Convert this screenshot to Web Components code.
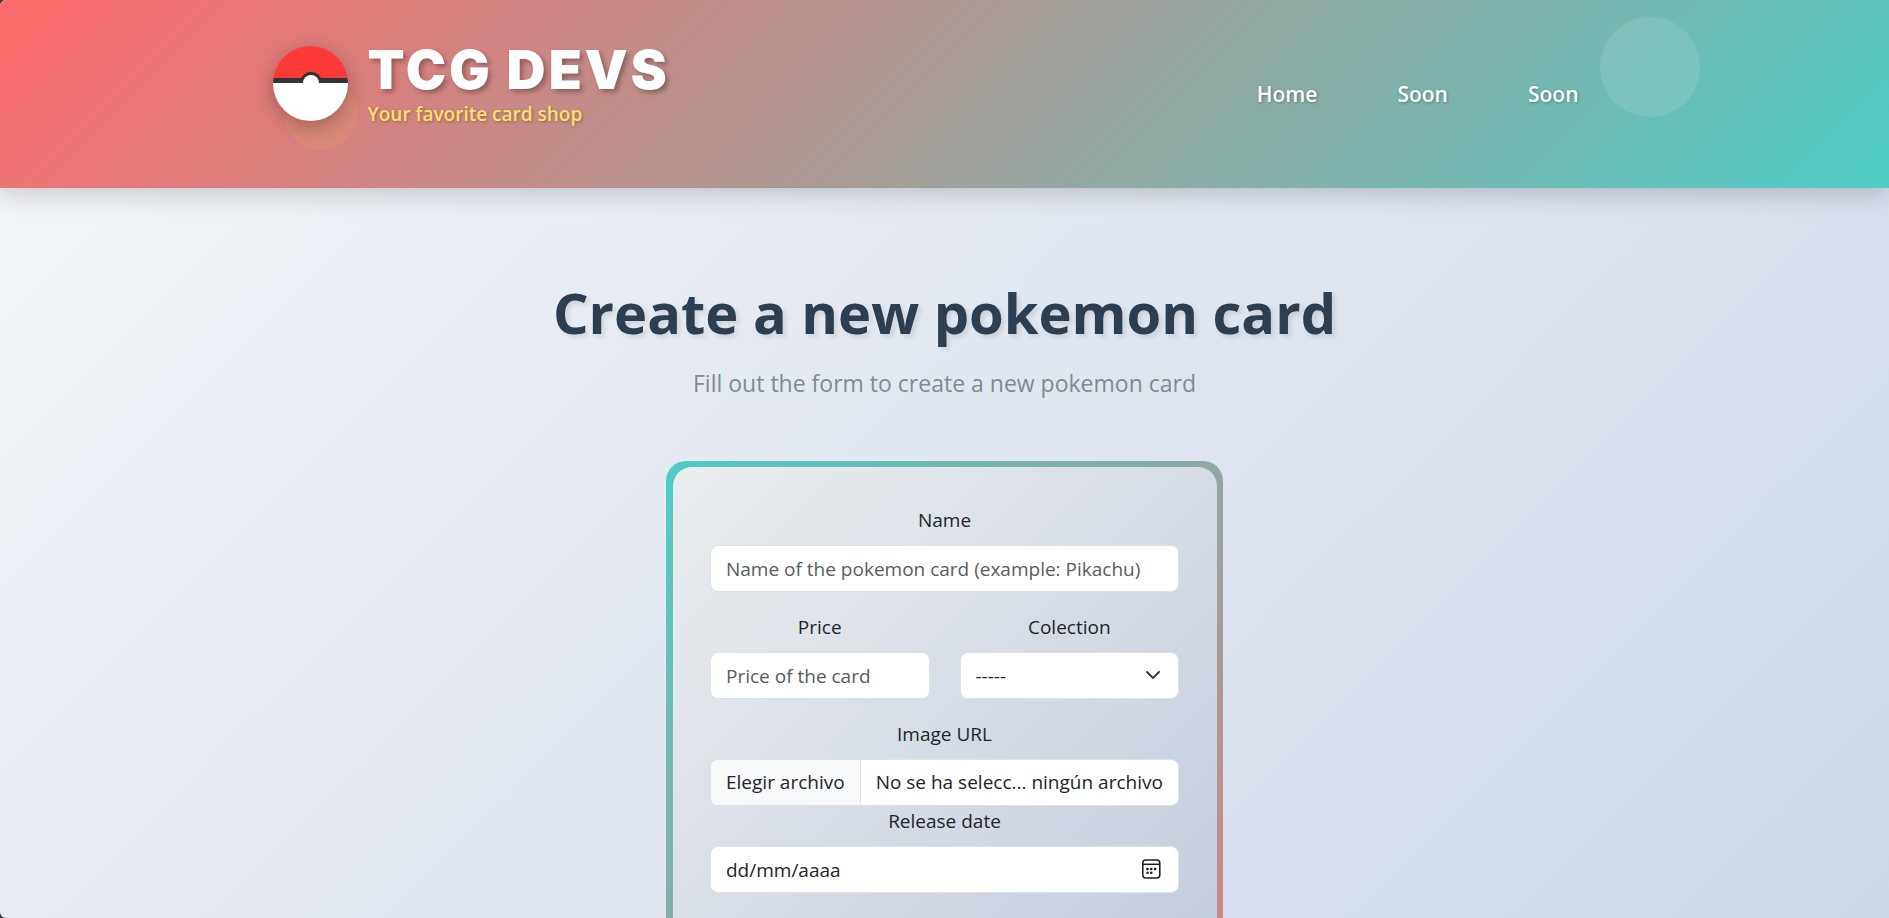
<!DOCTYPE html>
<html lang="en">
<head>
<meta charset="utf-8">
<meta name="viewport" content="width=device-width, initial-scale=1">
<title>TCG Devs</title>
<style>
  html { background: #3a3a3f; }
  body { margin: 0; font: 400 19px/30px "Open Sans", "Noto Sans", sans-serif; color: #212529; }
</style>
</head>
<body>
<tcg-page>
  <site-header slot="header">
    <site-brand slot="brand" tagline="Your favorite card shop">TCG DEVS</site-brand>
    <nav-link href="#home">Home</nav-link>
    <nav-link href="#soon">Soon</nav-link>
    <nav-link href="#later">Soon</nav-link>
  </site-header>
  <page-title>Create a new pokemon card<span slot="lead">Fill out the form to create a new pokemon card</span></page-title>
  <card-form>
    <text-field label="Name" placeholder="Name of the pokemon card (example: Pikachu)"></text-field>
    <field-row>
      <text-field label="Price" placeholder="Price of the card"></text-field>
      <select-field label="Colection" option="-----"></select-field>
    </field-row>
    <div class="stack">
      <file-field label="Image URL" button="Elegir archivo" status="No se ha selecc... ningún archivo"></file-field>
      <date-field label="Release date" placeholder="dd/mm/aaaa"></date-field>
    </div>
  </card-form>
</tcg-page>

<script>
  class BaseElement extends HTMLElement {
    connectedCallback() {
      if (this.shadowRoot) return;
      this.attachShadow({ mode: "open" }).innerHTML = this.render();
    }
    attr(name) { return this.getAttribute(name) || ""; }
  }

  customElements.define("tcg-page", class extends BaseElement {
    render() {
      return `<style>
        :host { display: flex; flex-direction: column; min-height: 100vh; border-radius: 6px 0 0 6px; overflow: hidden;
          background: linear-gradient(135deg, #f5f7fa, #c3cfe2) 0 0 / 100% 1620px; }
        main { flex: 1; display: flex; flex-direction: column; align-items: center; padding: 80px 24px 0; }
      </style>
      <slot name="header"></slot><main><slot></slot></main>`;
    }
  });

  customElements.define("site-header", class extends BaseElement {
    render() {
      return `<style>
        :host { display: block; position: relative; background: linear-gradient(135deg, #ff6b6b, #4ecdc4);
          box-shadow: 0 5px 25px rgba(0, 0, 0, .2); }
        header { position: relative; box-sizing: border-box; max-width: 1344px; min-height: 188px; margin: 0 auto;
          display: flex; justify-content: space-between; align-items: center; }
        nav { display: flex; gap: 80px; padding-right: 38px; }
        .bubble { position: absolute; border-radius: 50%; }
        .light { width: 100px; height: 100px; right: 10%; top: 17px; background: rgba(255, 255, 255, .1); }
        .warm { width: 75px; height: 75px; left: 15%; top: 75px; background: rgba(255, 217, 61, .1); }
      </style>
      <div class="bubble light"></div><div class="bubble warm"></div>
      <header><slot name="brand"></slot><nav aria-label="Main"><slot></slot></nav></header>`;
    }
  });

  customElements.define("poke-ball", class extends BaseElement {
    render() {
      return `<style>
        :host { display: block; width: 75px; height: 75px; border-radius: 50%; overflow: hidden;
          box-shadow: 0 5px 19px rgba(0, 0, 0, .3); }
        svg { display: block; }
      </style>
      <svg width="75" height="75" viewBox="0 0 75 75" aria-hidden="true">
        <rect width="75" height="75" fill="#ff3838"/>
        <rect y="32" width="75" height="5" fill="#333"/>
        <circle cx="38" cy="37" r="11" fill="#333"/>
        <rect y="37" width="75" height="38" fill="#fff"/>
        <circle cx="38" cy="37" r="8" fill="#fff"/>
      </svg>`;
    }
  });

  customElements.define("site-brand", class extends BaseElement {
    render() {
      return `<style>
        :host { display: flex; align-items: flex-start; gap: 20px; padding-bottom: 15px; }
        poke-ball { margin-top: 2px; }
        strong { display: block; font: 900 54px/52px Inter, "Liberation Sans", sans-serif; letter-spacing: 3px; color: #fff;
          text-shadow: 3px 3px 5px rgba(0, 0, 0, .3); }
        span { display: block; margin-top: 3px; font-weight: 600; color: #ffe066;
          text-shadow: 1px 1px 3px rgba(0, 0, 0, .3); }
      </style>
      <poke-ball></poke-ball>
      <div><strong><slot></slot></strong><span>${this.attr("tagline")}</span></div>`;
    }
  });

  customElements.define("nav-link", class extends BaseElement {
    render() {
      return `<style>
        :host { display: block; }
        a { color: #fff; text-decoration: none; font-size: 21px; line-height: 32px; font-weight: 600;
          text-shadow: 1px 1px 3px rgba(0, 0, 0, .3); }
      </style><a href="${this.attr("href")}"><slot></slot></a>`;
    }
  });

  customElements.define("page-title", class extends BaseElement {
    render() {
      return `<style>
        :host { display: block; text-align: center; margin-bottom: 60px; }
        h1 { margin: 0 0 10px; font-size: 56px; line-height: 88px; font-weight: 700; color: #2c3e50;
          text-shadow: 3px 3px 5px rgba(0, 0, 0, .1); }
        p { margin: 0; font-size: 23px; line-height: 35px; color: #7f8c8d; }
      </style><h1><slot></slot></h1><p><slot name="lead"></slot></p>`;
    }
  });

  customElements.define("card-form", class extends BaseElement {
    render() {
      return `<style>
        :host { flex: 1; display: flex; box-sizing: border-box; width: 100%; max-width: 557px; padding: 6px 6px 0 7px;
          border-radius: 20px 20px 0 0; background: linear-gradient(135deg, #4ecdc4, #ff6b6b) 0 0 / 100% 900px; }
        form { flex: 1; min-width: 0; padding: 38px 38px 24px 37px; border-radius: 19px 19px 0 0;
          background: linear-gradient(135deg, #ebeef0, #b3bed4) 0 0 / 100% 900px;
          display: flex; flex-direction: column; gap: 20px; }
      </style><form><slot></slot></form>`;
    }
  });

  customElements.define("field-row", class extends BaseElement {
    render() {
      return `<style>
        :host { display: grid; grid-template-columns: 1fr 1fr; gap: 30px; }
      </style><slot></slot>`;
    }
  });

  /* Shared frame of every form field: a centred label over one control. */
  class FormField extends BaseElement {
    render() {
      return `<style>
        :host { display: block; min-width: 0; }
        label.caption { display: block; margin-bottom: 10px; text-align: center; }
        .control { box-sizing: border-box; width: 100%; height: 47px; margin: 0; padding: 0 15px; display: block;
          font: inherit; color: inherit; background-color: #fff; border: 1px solid #dee2e6; border-radius: 8px; }
        .control::placeholder { color: #595c5f; opacity: 1; }
        ${this.css || ""}
      </style>
      <label class="caption" for="control">${this.attr("label")}</label>${this.control()}`;
    }
  }

  customElements.define("text-field", class extends FormField {
    control() { return `<input class="control" id="control" type="text" placeholder="${this.attr("placeholder")}">`; }
  });

  customElements.define("select-field", class extends FormField {
    css = `
      .wrap { position: relative; }
      select { appearance: none; }
      svg { position: absolute; right: 18px; top: 15px; pointer-events: none; }`;
    control() {
      return `<div class="wrap"><select class="control" id="control"><option>${this.attr("option")}</option></select>
        <svg width="16" height="16" viewBox="0 0 16 16" aria-hidden="true"><path d="m2 5 6 6 6-6" fill="none" stroke="#343a40" stroke-width="2" stroke-linecap="round" stroke-linejoin="round"/></svg></div>`;
    }
  });

  customElements.define("file-field", class extends FormField {
    css = `
      .file { position: relative; display: flex; padding: 0; overflow: hidden; line-height: 45px; white-space: nowrap; }
      .pick { padding: 0 15px; background: #f8f9fa; border-right: 1px solid #dee2e6; }
      .status { flex: 1; padding: 0 15px; overflow: hidden; }
      input { position: absolute; inset: 0; opacity: 0; width: 100%; }`;
    control() {
      return `<div class="control file"><span class="pick">${this.attr("button")}</span>
        <span class="status">${this.attr("status")}</span><input id="control" type="file"></div>`;
    }
  });

  customElements.define("date-field", class extends FormField {
    css = `
      .wrap { position: relative; }
      .control::placeholder { color: #212529; }
      button { position: absolute; right: 17px; top: 12px; padding: 0; border: 0; background: none; width: 22px; height: 22px; }
      svg { display: block; }`;
    control() {
      return `<div class="wrap"><input class="control" id="control" type="text" inputmode="numeric" placeholder="${this.attr("placeholder")}">
        <button type="button" aria-label="Open calendar"><svg width="22" height="22" viewBox="0 0 22 22" aria-hidden="true">
          <rect x="2.8" y="2" width="17" height="18" rx="3" fill="none" stroke="#1b1b1b" stroke-width="1.5"/>
          <path d="M3 6.3h16.6" stroke="#1b1b1b" stroke-width="1.5"/>
          <g fill="#1b1b1b"><circle cx="7.5" cy="11" r="1.3"/><circle cx="11.3" cy="11" r="1.3"/><circle cx="15.1" cy="11" r="1.3"/><circle cx="7.5" cy="14.8" r="1.3"/><circle cx="11.3" cy="14.8" r="1.3"/></g>
        </svg></button></div>`;
    }
  });
</script>
</body>
</html>
